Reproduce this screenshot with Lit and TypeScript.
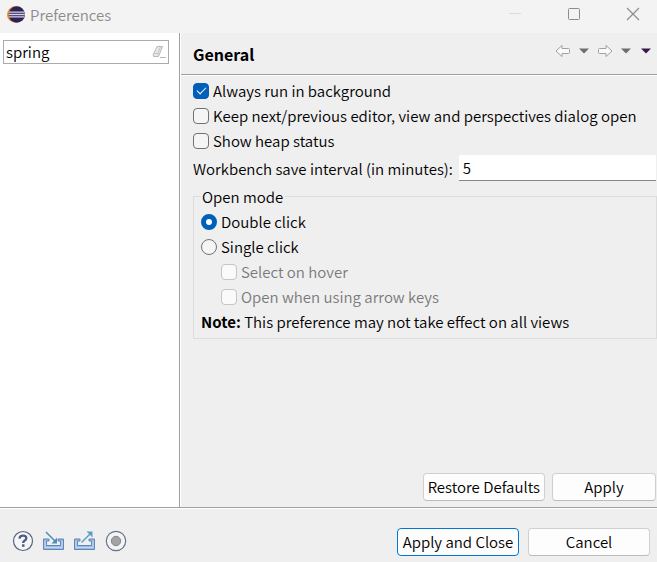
import { LitElement, html, css, svg } from "lit";
import { customElement } from "lit/decorators.js";

const logo = html`<svg width="20" height="20" viewBox="0 0 20 20" aria-hidden="true">
  <circle cx="9.3" cy="10.500" r="8.3" fill="#f08a24" />
  <circle cx="10.8" cy="10.500" r="8.2" fill="#2c2255" />
  <path d="M3 8.100h15.2M2.6 10.500h16.2M3 12.900h15.2" stroke="#d6d2e6" stroke-width="1.3" />
</svg>`;

const eraser = html`<svg width="14" height="14" viewBox="0 0 14 14" aria-hidden="true">
  <path d="M5 1.500H10.500L6.500 11.500H2Q.8 11.500 1.200 9.800Z" fill="#e9e9e9" stroke="#b9b9b9" />
  <path d="M1.500 8.500H5.700L6.500 11M5.700 8.500L8.700 1.500" fill="none" stroke="#c4c4c4" />
  <path d="M8 12.500h6" stroke="#b5b5b5" />
</svg>`;

const arrow = (d: string) => html`<svg width="16" height="14" viewBox="0 0 16 14" aria-hidden="true">
  <path d=${d} fill="#fafafa" stroke="#a0a0a0" stroke-linejoin="round" />
</svg>`;
const back = arrow("M1 7L7 1.500V4.500H13.500Q14.500 4.500 14.500 5.500V8.500Q14.500 9.500 13.500 9.500H7V12.500Z");
const forward = arrow("M15 7L9 1.500V4.500H2.500Q1.500 4.500 1.500 5.500V8.500Q1.500 9.500 2.500 9.500H9V12.500Z");

const caret = (color: string) => html`<svg width="10" height="6" viewBox="0 0 10 6" aria-hidden="true">
  <path d="M0 .5H10L5 5.500Z" fill=${color} />
</svg>`;

const tray = svg`<path d="M7 9H1.500V19.500H21.500V9H16V11H18.500V15.500H4.500V11H7Z"
  fill="#9db9e0" stroke="#5f86bd" /><path d="M3 11V17.500H20V11" fill="none" stroke="#c5d8f2" />`;

const help = html`<svg width="22" height="22" viewBox="0 0 22 22" aria-hidden="true">
  <circle cx="11" cy="11" r="9.500" fill="#f4f5f7" stroke="#566481" stroke-width="1.200" />
  <path d="M7.500 8.600Q7.700 5.700 11 5.700Q14.300 5.700 14.300 8.300Q14.300 9.800 12.500 10.800Q11.200 11.500 11.200 13" fill="none" stroke="#4c5c82" stroke-width="2.300" />
  <rect x="10" y="14.300" width="2.500" height="2.500" fill="#4c5c82" />
</svg>`;
const importIcon = html`<svg width="23" height="21" viewBox="0 0 23 21" aria-hidden="true">
  ${tray}
  <path d="M4 2L13.500 11.500" stroke="#4b8fbc" stroke-width="1.500" />
  <path d="M15 13.500V7.500L9.500 13.500Z" fill="#4b8fbc" />
</svg>`;
const exportIcon = html`<svg width="23" height="21" viewBox="0 0 23 21" aria-hidden="true">
  ${tray}
  <path d="M8.500 12.500L17 4" stroke="#5a9fc6" stroke-width="1.500" />
  <path d="M19.500 1.500V7.500L13.500 1.500Z" fill="#5a9fc6" />
</svg>`;
const record = html`<svg width="24" height="22" viewBox="0 0 24 22" aria-hidden="true">
  <circle cx="12" cy="11" r="9.700" fill="#f4f4f4" stroke="#66748e" stroke-width="1.200" />
  <circle cx="12" cy="11" r="4.700" fill="#a3a3a3" stroke="#858585" />
</svg>`;

@customElement("app-root")
export class AppRoot extends LitElement {
  static styles = css`
    :host {
      display: flex;
      flex-direction: column;
      min-height: 100vh;
      background: #efefef;
      color: #000;
      font: 350 15px/25px "Noto Sans CJK KR", "Noto Sans", sans-serif;
    }
    * { box-sizing: border-box; }
    svg { display: block; flex: none; }
    button, input { font: inherit; color: inherit; margin: 0; }
    .titlebar {
      display: flex;
      align-items: center;
      height: 33px;
      padding: 0 8px 5px 6px;
      gap: 4px;
      background: #f3f3f3;
      color: #8c8c8c;
    }
    .title { flex: 1; margin: 0; }
    .window { display: flex; gap: 27px; }
    .icon {
      display: flex;
      align-items: center;
      justify-content: center;
      padding: 0;
      border: 0;
      background: none;
    }
    .window .icon { width: 32px; height: 24px; }
    .body {
      flex: 1;
      display: grid;
      grid-template-columns: 180px minmax(0, 1fr);
      border-bottom: 1px solid #a0a0a0;
    }
    .sidebar {
      padding: 7px 10px 0 3px;
      background: #fff;
      border-right: 1px solid #a0a0a0;
    }
    .filter {
      display: flex;
      align-items: center;
      height: 24px;
      padding: 0 2px;
      border: 1px solid #ababab;
    }
    .filter input {
      flex: 1;
      min-width: 0;
      height: 22px;
      padding: 0 0 2px;
      border: 0;
      outline: 0;
      background: none;
    }
    .page {
      display: flex;
      flex-direction: column;
      border-left: 1px solid #fff;
    }
    .head {
      display: flex;
      align-items: center;
      height: 42px;
      padding: 0 6px 0 12px;
      border-bottom: 1px solid #a0a0a0;
    }
    .head h1 { flex: 1; margin: 0; padding-top: 2px; font-size: 16px; font-weight: 700; }
    .nav { display: flex; align-items: center; gap: 8px; padding-bottom: 5px; }
    .nav .menu { margin-left: 2px; }
    .form {
      flex: 1;
      padding: 2px 0 0 12px;
      border-top: 1px solid #fff;
    }
    .option { display: flex; align-items: center; gap: 4px; height: 25px; }
    .option.nested { padding-left: 20px; color: #7a7a7a; }
    .mark {
      appearance: none;
      flex: none;
      display: grid;
      place-items: center;
      width: 16px;
      height: 16px;
      border: 1px solid #727272;
      border-radius: 4px;
      background: #f5f5f5;
    }
    .mark[type="radio"] { border-radius: 50%; }
    .mark[type="radio"]:checked { border: 5px solid #005fb8; background: #fff; }
    .mark[type="checkbox"]:checked { border-color: #005fb8; background: #005fb8; }
    .mark[type="checkbox"]:checked::before {
      content: "";
      width: 8px;
      height: 4px;
      margin-bottom: 2px;
      border: solid #fff;
      border-width: 0 0 1px 1px;
      transform: rotate(-45deg);
    }
    .mark:disabled { border-color: #c5c5c5; background: #fafafa; }
    .interval { display: flex; align-items: center; gap: 6px; margin-top: 2px; height: 26px; }
    .interval input {
      flex: 1;
      min-width: 0;
      height: 26px;
      margin-right: 1px;
      padding: 0 4px;
      border: 0;
      border-bottom: 1px solid #868686;
      border-radius: 0;
      background: #fff;
      outline: 0;
    }
    fieldset {
      min-width: 0;
      margin: 3px 0 0;
      padding: 0 7px 4px;
      border: 1px solid #dcdcdc;
    }
    legend { padding: 0 2px 0 1px; }
    .note { margin: 0; }
    .actions { display: flex; justify-content: flex-end; gap: 7px; padding: 0 1px 6px 12px; }
    .push {
      height: 28px;
      min-width: 104px;
      padding: 0 4px;
      border: 1px solid #d0d0d0;
      border-bottom-color: #bcbcbc;
      border-radius: 4px;
      background: #fdfdfd;
      line-height: 24px;
      white-space: nowrap;
    }
    .footer {
      display: flex;
      align-items: center;
      height: 54px;
      padding: 12px 7px 0 12px;
      border-top: 1px solid #fff;
    }
    .tools { flex: 1; display: flex; gap: 8px; padding-bottom: 2px; }
    .footer .push { width: 122px; }
    .confirm { display: flex; gap: 9px; }
    .push.primary { border-color: #0078d4; }
  `;

  private check(label: string, checked = false, nested = false) {
    return html`<label class="option ${nested ? "nested" : ""}">
      <input class="mark" type="checkbox" .checked=${checked} ?disabled=${nested} />${label}
    </label>`;
  }

  private radio(label: string, checked = false) {
    return html`<label class="option">
      <input class="mark" type="radio" name="open-mode" .checked=${checked} />${label}
    </label>`;
  }

  render() {
    return html`
      <header class="titlebar">
        ${logo}
        <p class="title">Preferences</p>
        <div class="window">
          <button class="icon" aria-label="Minimize" disabled>
            <svg width="14" height="14" viewBox="0 0 14 14"><path d="M1 6.500h12" stroke="#dcdcdc" /></svg>
          </button>
          <button class="icon" aria-label="Maximize">
            <svg width="14" height="14" viewBox="0 0 14 14"><rect x="1.500" y="1.500" width="11" height="11" rx="1" fill="none" stroke="#8c8c8c" /></svg>
          </button>
          <button class="icon" aria-label="Close">
            <svg width="14" height="14" viewBox="0 0 14 14"><path d="M1 1L13 13M13 1L1 13" stroke="#8c8c8c" stroke-width="1.200" /></svg>
          </button>
        </div>
      </header>
      <main class="body">
        <aside class="sidebar">
          <div class="filter">
            <input type="text" aria-label="Filter" .value=${"spring"} />
            <button class="icon" aria-label="Clear">${eraser}</button>
          </div>
        </aside>
        <section class="page">
          <div class="head">
            <h1>General</h1>
            <div class="nav">
              <button class="icon" aria-label="Back">${back}</button>
              <button class="icon" aria-label="Back history">${caret("#6d6d6d")}</button>
              <button class="icon" aria-label="Forward">${forward}</button>
              <button class="icon" aria-label="Forward history">${caret("#6d6d6d")}</button>
              <button class="icon menu" aria-label="Menu">${caret("#36184f")}</button>
            </div>
          </div>
          <div class="form">
            ${this.check("Always run in background", true)}
            ${this.check("Keep next/previous editor, view and perspectives dialog open")}
            ${this.check("Show heap status")}
            <div class="interval">
              <label for="interval">Workbench save interval (in minutes):</label>
              <input id="interval" type="text" .value=${"5"} />
            </div>
            <fieldset>
              <legend>Open mode</legend>
              ${this.radio("Double click", true)}
              ${this.radio("Single click")}
              ${this.check("Select on hover", false, true)}
              ${this.check("Open when using arrow keys", false, true)}
              <p class="note"><b>Note:</b> This preference may not take effect on all views</p>
            </fieldset>
          </div>
          <div class="actions">
            <button class="push">Restore Defaults</button>
            <button class="push">Apply</button>
          </div>
        </section>
      </main>
      <footer class="footer">
        <div class="tools">
          <button class="icon" aria-label="Help">${help}</button>
          <button class="icon" aria-label="Import">${importIcon}</button>
          <button class="icon" aria-label="Export">${exportIcon}</button>
          <button class="icon" aria-label="Record">${record}</button>
        </div>
        <div class="confirm">
          <button class="push primary">Apply and Close</button>
          <button class="push">Cancel</button>
        </div>
      </footer>
    `;
  }
}
